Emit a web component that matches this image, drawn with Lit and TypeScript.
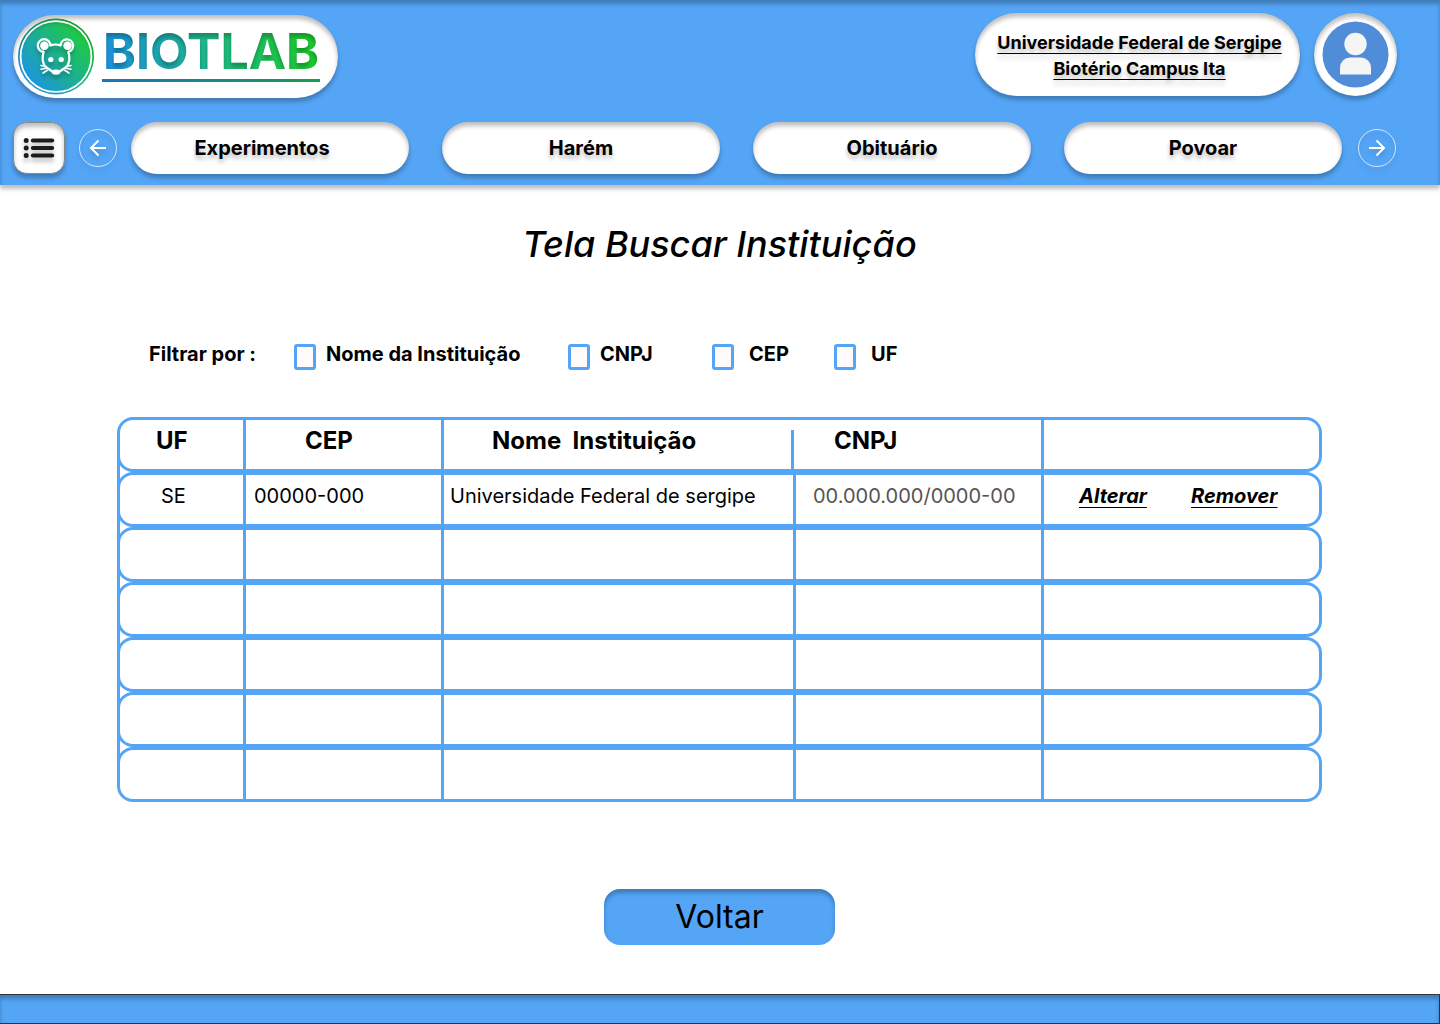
import { LitElement, html, css, svg } from "lit";
import { customElement, state } from "lit/decorators.js";

interface Institution {
  uf: string;
  cep: string;
  name: string;
  cnpj: string;
}

const SECTIONS = ["Experimentos", "Harém", "Obituário", "Povoar"];
const FILTERS = ["Nome da Instituição", "CNPJ", "CEP", "UF"];
const ROWS_PER_PAGE = 6;

@customElement("biotlab-logo")
export class BiotlabLogo extends LitElement {
  static styles = css`
    :host {
      display: block;
    }
    .logo {
      display: block;
      width: 325px;
      height: 83px;
    }
    .name {
      font: 700 50px Inter, sans-serif;
    }
  `;

  render() {
    return html`
      <svg class="logo" viewBox="0 0 325 83" role="img" aria-label="BIOTLAB">
        <defs>
          <linearGradient id="badge" x1="0.1" y1="0.85" x2="0.85" y2="0.2">
            <stop offset="0" stop-color="#1c92e8" />
            <stop offset="1" stop-color="#1dcb41" />
          </linearGradient>
          <linearGradient id="letters" gradientUnits="userSpaceOnUse" x1="92" y1="56" x2="300" y2="16">
            <stop offset="0" stop-color="#1c92e0" />
            <stop offset="0.5" stop-color="#1fb98a" />
            <stop offset="1" stop-color="#1dcb2c" />
          </linearGradient>
          <linearGradient id="rule" x1="0" x2="1">
            <stop offset="0" stop-color="#1b75bb" />
            <stop offset="1" stop-color="#1a9a50" />
          </linearGradient>
          <filter id="inset" x="-5%" y="-10%" width="110%" height="130%" color-interpolation-filters="sRGB">
            <feOffset in="SourceAlpha" dy="4" result="moved" />
            <feGaussianBlur in="moved" stdDeviation="2" result="soft" />
            <feComposite in="SourceAlpha" in2="soft" operator="out" result="edge" />
            <feFlood flood-color="#000" flood-opacity="0.25" />
            <feComposite in2="edge" operator="in" result="shade" />
            <feMerge>
              <feMergeNode in="SourceGraphic" />
              <feMergeNode in="shade" />
            </feMerge>
          </filter>
          <filter id="drop" x="-20%" y="-20%" width="140%" height="150%">
            <feDropShadow dx="0" dy="4" stdDeviation="2" flood-color="#000" flood-opacity="0.25" />
          </filter>
        </defs>
        <g filter="url(#inset)">
          <circle cx="43" cy="41.5" r="38" fill="url(#badge)" />
        </g>
        <circle cx="43" cy="41.5" r="35.4" fill="none" stroke="#fff" stroke-width="1.8" />
        <g filter="url(#drop)">${this.mouse()}</g>
        <text class="name" x="90" y="54" fill="url(#letters)" filter="url(#inset)">BIOTLAB</text>
        <rect x="89" y="64" width="218" height="3" fill="url(#rule)" />
      </svg>
    `;
  }

  private mouse() {
    return svg`
      <g fill="none" stroke="#fff" stroke-width="2.2" stroke-linecap="round" stroke-linejoin="round">
        <path d="M37.4 30.400C40 29.500 45 29.500 47.600 30.400A6.300 6.300 0 1 1 55.400 36.800C56.600 41 56.800 46 54.800 50C53 53 49 54.500 46 56.800H40C37 54.500 33 53 31.200 50C29.200 46 29.400 41 30.600 36.800A6.300 6.300 0 1 1 37.400 30.400Z" />
        <path d="M32.500 51.400 28 50.400M33 53.300 28 54.200M34.500 55.200 30 58M53.500 51.400 58 50.400M53 53.300 58 54.200M51.500 55.200 56 58" stroke-width="1.5" />
      </g>
      <g fill="#fff">
        <circle cx="31.400" cy="30.800" r="4.200" />
        <circle cx="54.600" cy="30.800" r="4.200" />
        <circle cx="37.800" cy="44.500" r="2.600" />
        <circle cx="48.200" cy="44.500" r="2.600" />
        <ellipse cx="43" cy="57" rx="4.200" ry="2.600" />
      </g>
    `;
  }
}

@customElement("app-root")
export class AppRoot extends LitElement {
  static styles = css`
    :host {
      --blue: #54a5f6;
      --drop: 0 4px 4px rgba(0, 0, 0, 0.25);
      --inner: inset 0 4px 4px rgba(0, 0, 0, 0.25);
      display: flex;
      flex-direction: column;
      min-height: 100vh;
      background: #fff;
      color: #000;
      font: 400 20px/24px Inter, sans-serif;
    }
    *,
    *::before {
      box-sizing: border-box;
    }
    button {
      border: 0;
      padding: 0;
      color: inherit;
      font: inherit;
      cursor: pointer;
    }
    a {
      color: inherit;
      text-decoration-line: underline;
      text-decoration-thickness: 1px;
      text-decoration-skip-ink: none;
      text-underline-offset: 4px;
    }
    .header {
      display: flex;
      flex-direction: column;
      gap: 24px;
      padding: 13px 43px 11px 13px;
      background: var(--blue);
      box-shadow: var(--drop), var(--inner);
    }
    .brand-row {
      display: flex;
      align-items: flex-start;
      gap: 14px;
    }
    .brand {
      margin: 2px auto 0 0;
      border-radius: 42px;
      background: #fff;
      box-shadow: var(--drop), var(--inner);
    }
    .campus {
      display: flex;
      align-items: center;
      justify-content: center;
      width: 325px;
      height: 83px;
      padding: 2px 0 0 4px;
      border-radius: 42px;
      background: #fff;
      box-shadow: var(--drop), var(--inner);
      font-size: 18px;
      line-height: 26px;
      font-weight: 700;
      text-align: center;
      text-shadow: var(--drop);
    }
    .avatar {
      display: grid;
      place-items: center;
      width: 83px;
      height: 83px;
      border-radius: 50%;
      background: #fff;
      box-shadow: var(--drop), var(--inner);
    }
    .avatar-icon {
      width: 67px;
      height: 67px;
    }
    .nav-row {
      display: flex;
      align-items: center;
      gap: 14px;
      padding-right: 1px;
    }
    .menu {
      display: grid;
      place-items: center;
      width: 52px;
      height: 52px;
      border: 1px solid #888;
      border-radius: 14px;
      background: #fff;
      box-shadow: var(--drop), var(--inner);
    }
    .menu-icon {
      width: 32px;
      height: 22px;
      filter: drop-shadow(0 4px 2px rgba(0, 0, 0, 0.25));
    }
    .arrow {
      display: grid;
      place-items: center;
      width: 38px;
      height: 38px;
      border: 1px solid #cfe6fd;
      border-radius: 50%;
      background: none;
      filter: drop-shadow(0 4px 2px rgba(0, 0, 0, 0.15));
    }
    .arrow-icon {
      width: 18px;
      height: 18px;
    }
    .sections {
      display: grid;
      grid-template-columns: repeat(4, 1fr);
      gap: 33px;
      flex: 1;
      padding-right: 2px;
    }
    .section {
      height: 52px;
      border-radius: 26px;
      background: #fff;
      box-shadow: var(--drop), var(--inner);
      font-weight: 700;
      text-shadow: var(--drop);
    }
    .section:first-child {
      padding-right: 16px;
    }
    .main {
      display: flex;
      flex: 1;
      flex-direction: column;
      padding: 37px 118px 49px 117px;
    }
    .title {
      margin: 0;
      font-size: 36px;
      line-height: 44px;
      font-style: italic;
      font-weight: 500;
      text-align: center;
    }
    .filters {
      display: grid;
      grid-template-columns: 145px 274px 144px 122px auto;
      justify-content: start;
      margin: 76px 0 47px;
      padding-left: 32px;
      font-weight: 700;
    }
    .filter {
      display: flex;
      gap: 10px;
    }
    .filter.wide {
      gap: 15px;
    }
    .box {
      flex: none;
      appearance: none;
      width: 22px;
      height: 26px;
      margin: 2px 0 0;
      border: 3px solid var(--blue);
      border-radius: 3px;
      background: #fffbfb;
    }
    .box:checked {
      background: var(--blue);
    }
    .table {
      width: 100%;
      border-spacing: 0;
      table-layout: fixed;
      background: linear-gradient(var(--blue), var(--blue)) left center / 3px calc(100% - 40px) no-repeat;
    }
    .col-uf {
      width: 129px;
    }
    .col-cep {
      width: 198px;
    }
    .col-cnpj {
      width: 248px;
    }
    .col-actions {
      width: 278px;
    }
    .cell {
      height: 55px;
      padding: 0 0 8px 8px;
      border: solid var(--blue);
      border-width: 3px 3px 3px 0;
      text-align: left;
      white-space: nowrap;
    }
    .cell:first-child {
      padding-left: 41px;
      border-left-width: 3px;
      border-radius: 16px 0 0 16px;
    }
    .cell:last-child {
      padding-left: 35px;
      border-radius: 0 16px 16px 0;
    }
    .cell.name {
      padding-left: 6px;
    }
    .cell.cnpj {
      padding-left: 17px;
      color: #555;
    }
    .cell.head {
      font-size: 24px;
      font-weight: 700;
    }
    .cell.head:first-child {
      padding-left: 36px;
    }
    .cell.head.cep {
      padding-left: 59px;
    }
    .cell.head.name {
      padding-left: 48px;
      border-right: 0;
      background: linear-gradient(var(--blue), var(--blue)) right 2px bottom / 3px 39px no-repeat;
    }
    .cell.head.cnpj {
      padding-left: 38px;
      color: #000;
    }
    .actions {
      display: flex;
      gap: 44px;
      font-style: italic;
      font-weight: 700;
    }
    .back {
      align-self: center;
      width: 231px;
      height: 56px;
      margin-top: auto;
      border-radius: 16px;
      background: var(--blue);
      box-shadow: var(--inner);
      font-size: 32px;
      line-height: 40px;
    }
    .footer {
      height: 30px;
      border: solid #333;
      border-width: 1px 1px 1px 0;
      background: var(--blue);
      box-shadow: var(--inner);
    }
  `;

  @state() private institutions: Institution[] = [
    { uf: "SE", cep: "00000-000", name: "Universidade Federal de sergipe", cnpj: "00.000.000/0000-00" },
  ];

  render() {
    return html`
      <header class="header">
        <div class="brand-row">
          <biotlab-logo class="brand"></biotlab-logo>
          <a class="campus" href="#campus">Universidade Federal de Sergipe<br />Biotério Campus Ita</a>
          <button class="avatar" aria-label="Perfil">
            <svg class="avatar-icon" viewBox="0 0 67 67" aria-hidden="true">
              <circle cx="33.5" cy="33.5" r="33" fill="#508cd8" />
              <circle cx="33.5" cy="23" r="11.2" fill="#f5f5f5" />
              <path d="M18 53.5V46.5A10 10 0 0 1 28 36.5H39A10 10 0 0 1 49 46.5V53.5Z" fill="#f5f5f5" />
            </svg>
          </button>
        </div>
        <nav class="nav-row" aria-label="Seções">
          <button class="menu" aria-label="Menu">
            <svg class="menu-icon" viewBox="0 0 32 22" aria-hidden="true" fill="#1d1b1b">
              ${[3.5, 11, 18.5].map(
                (y) => svg`
                  <circle cx="3.2" cy=${y} r="2.5" />
                  <rect x="7.8" y=${y - 2} width="23.4" height="4" rx="2" />
                `
              )}
            </svg>
          </button>
          ${this.arrow("Anterior", "M17 9H2M9.5 1.5 2 9L9.5 16.5")}
          <div class="sections">
            ${SECTIONS.map((label) => html`<button class="section">${label}</button>`)}
          </div>
          ${this.arrow("Próximo", "M1 9H16M8.5 1.5 16 9L8.5 16.5")}
        </nav>
      </header>

      <main class="main">
        <h1 class="title">Tela Buscar Instituição</h1>

        <div class="filters" role="group" aria-labelledby="filter-title">
          <span id="filter-title">Filtrar por :</span>
          ${FILTERS.map(
            (label, i) => html`<label class=${i < 2 ? "filter" : "filter wide"}
              ><input class="box" type="checkbox" />${label}</label
            >`
          )}
        </div>

        <table class="table">
          <colgroup>
            <col class="col-uf" />
            <col class="col-cep" />
            <col />
            <col class="col-cnpj" />
            <col class="col-actions" />
          </colgroup>
          <thead>
            <tr>
              <th class="cell head">UF</th>
              <th class="cell head cep">CEP</th>
              <th class="cell head name">Nome&nbsp; Instituição</th>
              <th class="cell head cnpj">CNPJ</th>
              <th class="cell head"></th>
            </tr>
          </thead>
          <tbody>
            ${Array.from({ length: ROWS_PER_PAGE }, (_, i) => this.row(this.institutions[i]))}
          </tbody>
        </table>

        <button class="back">Voltar</button>
      </main>

      <footer class="footer"></footer>
    `;
  }

  private arrow(label: string, path: string) {
    return html`
      <button class="arrow" aria-label=${label}>
        <svg class="arrow-icon" viewBox="0 0 18 18" aria-hidden="true">
          <path d=${path} fill="none" stroke="#fff" stroke-width="2" />
        </svg>
      </button>
    `;
  }

  private row(item?: Institution) {
    return html`
      <tr>
        <td class="cell">${item?.uf}</td>
        <td class="cell">${item?.cep}</td>
        <td class="cell name">${item?.name}</td>
        <td class="cell cnpj">${item?.cnpj}</td>
        <td class="cell">
          ${item
            ? html`<div class="actions"><a href="#alterar">Alterar</a><a href="#remover">Remover</a></div>`
            : null}
        </td>
      </tr>
    `;
  }
}
